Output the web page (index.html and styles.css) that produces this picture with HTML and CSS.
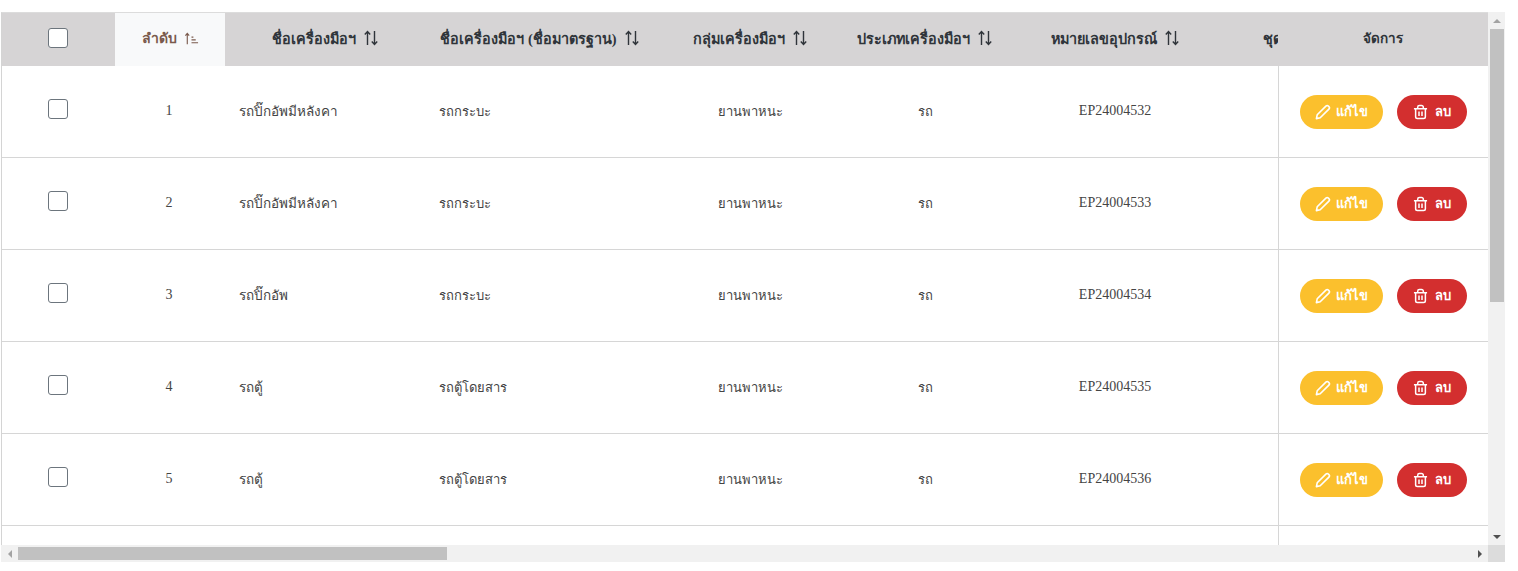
FILE: index.html
```html
<!DOCTYPE html>
<html lang="th">
<head>
<meta charset="utf-8">
<title>เครื่องมือ</title>
<link rel="stylesheet" href="styles.css">
</head>
<body>
<svg class="defs" width="0" height="0">
  <defs>
    <symbol id="sort" viewBox="0 0 16 16">
      <path d="M4.5 15V1.5M1.8 4.5l2.7-3 2.7 3" fill="none" stroke="currentColor" stroke-width="1.4"/>
      <path d="M11.5 1v13.5M8.8 11.5l2.7 3 2.7-3" fill="none" stroke="currentColor" stroke-width="1.4"/>
    </symbol>
    <symbol id="sort-asc" viewBox="0 0 16 16">
      <path d="M3.5 14V2.5M1.5 5l2-2.5 2 2.5" fill="none" stroke="currentColor" stroke-width="1.2"/>
      <path d="M8 6.5h2M8 9.5h4.5M8 12.5h7" fill="none" stroke="currentColor" stroke-width="1.2"/>
    </symbol>
    <symbol id="pencil" viewBox="0 0 16 16">
      <path d="M1.4 14.6l.8-3.8 8.7-8.7a1.8 1.8 0 0 1 2.5 0l.5.5a1.8 1.8 0 0 1 0 2.5l-8.7 8.7z" fill="none" stroke="currentColor" stroke-width="1.6" stroke-linejoin="round"/>
    </symbol>
    <symbol id="trash" viewBox="0 0 16 16">
      <path d="M1 4.5h14M2.8 4.5v8.6A1.9 1.9 0 0 0 4.7 15h6.6a1.9 1.9 0 0 0 1.9-1.9V4.5M5 4.5V2.8A1.8 1.8 0 0 1 6.8 1h2.4A1.8 1.8 0 0 1 11 2.8v1.7M6.4 7.5v4.8M9.6 7.5v4.8" fill="none" stroke="currentColor" stroke-width="1.6"/>
    </symbol>
  </defs>
</svg>

<main class="frame">
  <div class="viewport">
    <table class="grid">
      <colgroup>
        <col class="c-check"><col class="c-no"><col class="c-name"><col class="c-std"><col class="c-group"><col class="c-type"><col class="c-code"><col class="c-set"><col class="c-act">
      </colgroup>
      <thead>
        <tr>
          <th><span class="check"></span></th>
          <th class="sorted"><span class="th-in">ลำดับ <svg class="sort-icon"><use href="#sort-asc"/></svg></span></th>
          <th><span class="th-in">ชื่อเครื่องมือฯ <svg class="sort-icon"><use href="#sort"/></svg></span></th>
          <th><span class="th-in">ชื่อเครื่องมือฯ (ชื่อมาตรฐาน) <svg class="sort-icon"><use href="#sort"/></svg></span></th>
          <th><span class="th-in">กลุ่มเครื่องมือฯ <svg class="sort-icon"><use href="#sort"/></svg></span></th>
          <th><span class="th-in">ประเภทเครื่องมือฯ <svg class="sort-icon"><use href="#sort"/></svg></span></th>
          <th><span class="th-in">หมายเลขอุปกรณ์ <svg class="sort-icon"><use href="#sort"/></svg></span></th>
          <th class="set-head">ชุดเครื่องมือ</th>
          <th class="pin pin-head">จัดการ</th>
        </tr>
      </thead>
      <tbody>
        <tr>
          <td><span class="check"></span></td><td class="no">1</td><td class="name">รถปิ๊กอัพมีหลังคา</td><td class="thai">รถกระบะ</td><td class="mid thai">ยานพาหนะ</td><td class="mid thai">รถ</td><td class="mid">EP24004532</td><td></td>
          <td class="pin"><div class="actions"><button class="btn edit"><svg class="btn-icon"><use href="#pencil"/></svg>แก้ไข</button><button class="btn del"><svg class="btn-icon"><use href="#trash"/></svg>ลบ</button></div></td>
        </tr>
        <tr>
          <td><span class="check"></span></td><td class="no">2</td><td class="name">รถปิ๊กอัพมีหลังคา</td><td class="thai">รถกระบะ</td><td class="mid thai">ยานพาหนะ</td><td class="mid thai">รถ</td><td class="mid">EP24004533</td><td></td>
          <td class="pin"><div class="actions"><button class="btn edit"><svg class="btn-icon"><use href="#pencil"/></svg>แก้ไข</button><button class="btn del"><svg class="btn-icon"><use href="#trash"/></svg>ลบ</button></div></td>
        </tr>
        <tr>
          <td><span class="check"></span></td><td class="no">3</td><td class="name">รถปิ๊กอัพ</td><td class="thai">รถกระบะ</td><td class="mid thai">ยานพาหนะ</td><td class="mid thai">รถ</td><td class="mid">EP24004534</td><td></td>
          <td class="pin"><div class="actions"><button class="btn edit"><svg class="btn-icon"><use href="#pencil"/></svg>แก้ไข</button><button class="btn del"><svg class="btn-icon"><use href="#trash"/></svg>ลบ</button></div></td>
        </tr>
        <tr>
          <td><span class="check"></span></td><td class="no">4</td><td class="name">รถตู้</td><td class="thai">รถตู้โดยสาร</td><td class="mid thai">ยานพาหนะ</td><td class="mid thai">รถ</td><td class="mid">EP24004535</td><td></td>
          <td class="pin"><div class="actions"><button class="btn edit"><svg class="btn-icon"><use href="#pencil"/></svg>แก้ไข</button><button class="btn del"><svg class="btn-icon"><use href="#trash"/></svg>ลบ</button></div></td>
        </tr>
        <tr>
          <td><span class="check"></span></td><td class="no">5</td><td class="name">รถตู้</td><td class="thai">รถตู้โดยสาร</td><td class="mid thai">ยานพาหนะ</td><td class="mid thai">รถ</td><td class="mid">EP24004536</td><td></td>
          <td class="pin"><div class="actions"><button class="btn edit"><svg class="btn-icon"><use href="#pencil"/></svg>แก้ไข</button><button class="btn del"><svg class="btn-icon"><use href="#trash"/></svg>ลบ</button></div></td>
        </tr>
        <tr>
          <td></td><td></td><td></td><td></td><td></td><td></td><td></td><td></td><td class="pin"></td>
        </tr>
      </tbody>
    </table>
  </div>

  <div class="vbar">
    <span class="arrow up"></span>
    <div class="vtrack"><div class="vthumb"></div></div>
    <span class="arrow down"></span>
  </div>
  <div class="hbar">
    <span class="arrow left"></span>
    <div class="htrack"><div class="hthumb"></div></div>
    <span class="arrow right"></span>
  </div>
  <div class="corner"></div>
</main>
</body>
</html>
```
FILE: styles.css
```css
* { box-sizing: border-box; }

html, body { height: 100%; }

body {
  margin: 0;
  padding: 12px 13px 9px 1px;
  background: #fff;
  font-family: "Liberation Serif", "Noto Sans", serif;
  font-size: 14px;
  color: #444;
  overflow: hidden;
}

.defs { display: block; width: 0; height: 0; }

.frame {
  display: grid;
  grid-template-columns: 1487px 17px;
  grid-template-rows: 533px 17px;
  height: 550px;
}

.viewport {
  overflow: hidden;
  border-left: 1px solid #d4d4d4;
  border-top: 1px solid #dcdcdc;
}

.grid {
  width: 1590px;
  table-layout: fixed;
  border-collapse: separate;
  border-spacing: 0;
}

.c-check { width: 113px; }
.c-no { width: 110px; }
.c-name { width: 200px; }
.c-std { width: 230px; }
.c-group { width: 190px; }
.c-type { width: 160px; }
.c-code { width: 220px; }
.c-set { width: 157px; }
.c-act { width: 210px; }

th {
  height: 53px;
  padding: 0 0 3px;
  background: #d6d4d5;
  color: #2f343a;
  font-size: 14.4px;
  font-weight: 700;
  text-align: center;
  white-space: nowrap;
  overflow: hidden;
}

th:first-child { padding: 0 2px 3px 0; }

th.sorted {
  background: #f8f9fa;
  color: #7a5a4c;
  font-size: 14px;
}

th.set-head { padding: 0 6px 3px 0; }
th.pin-head { font-size: 13.5px; }

.th-in {
  display: inline-flex;
  align-items: center;
  gap: 7px;
}

.sort-icon { width: 16px; height: 16px; flex: none; }
.sorted .sort-icon { width: 15px; height: 15px; }

td {
  height: 92px;
  padding: 0 15px 2px 14px;
  background: #fff;
  border-bottom: 1px solid #d6d6d6;
  white-space: nowrap;
}

td.mid, td.no, td:first-child { text-align: center; }
td.mid { padding: 0 15px 2px; }
td.no { padding: 0 2px 2px 0; }
td:first-child { padding: 0 2px 5px 0; }

td.thai { font-size: 13px; padding-bottom: 1px; }
td.name { font-size: 13.5px; }

.check {
  display: inline-block;
  width: 20px;
  height: 20px;
  border: 1px solid #6c757d;
  border-radius: 3px;
  background: #fff;
  vertical-align: middle;
}

.pin {
  position: sticky;
  right: 0;
  z-index: 1;
}

td.pin {
  padding: 0 0 0 21px;
  border-left: 1px solid #d6d6d6;
}

.actions { display: flex; gap: 14px; }

.btn {
  display: inline-flex;
  align-items: center;
  justify-content: center;
  height: 34px;
  border: 0;
  border-radius: 17px;
  color: #fff;
  font-family: inherit;
  font-size: 13px;
  font-weight: 700;
  padding: 0;
}

.edit { width: 83px; background: #fbc02d; gap: 5px; }
.del { width: 70px; background: #d32f2f; gap: 7px; }

.btn-icon { width: 16px; height: 16px; flex: none; }
.del .btn-icon { width: 15px; height: 16px; }

.vbar {
  display: flex;
  flex-direction: column;
  align-items: center;
  background: #f1f1f1;
}

.vtrack { flex: 1; width: 100%; padding: 0 1px 0 2px; }
.vthumb { width: 14px; height: 273px; background: #c1c1c1; }

.hbar {
  display: flex;
  align-items: center;
  background: #f1f1f1;
}

.htrack { flex: 1; height: 100%; padding-top: 2px; }
.hthumb { width: 429px; height: 13px; background: #c1c1c1; }

.corner { background: #dcdcdc; }

.arrow {
  flex: none;
  display: flex;
  align-items: center;
  justify-content: center;
  width: 17px;
  height: 17px;
}

.arrow::before {
  content: "";
  border: 4px solid transparent;
}

.up::before { border-top: 0; border-bottom-color: #a3a3a3; }
.down::before { border-bottom: 0; border-top-color: #505050; }
.left::before { border-left: 0; border-right-color: #a3a3a3; }
.right::before { border-right: 0; border-left-color: #505050; }
```
